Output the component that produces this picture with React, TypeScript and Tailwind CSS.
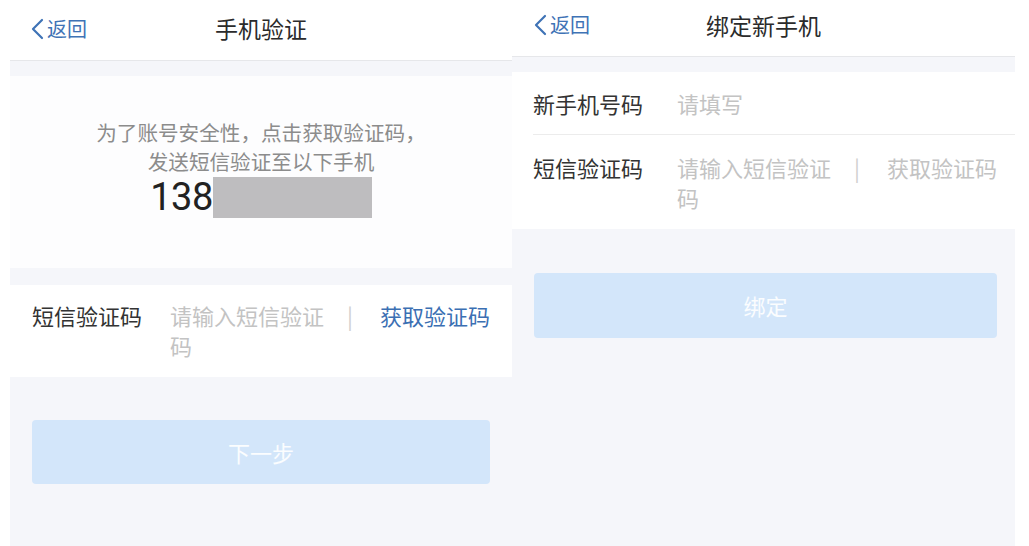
import { FC } from "react";

const font = { fontFamily: '"Noto Sans CJK SC", "Noto Sans", sans-serif' };

const BackLink: FC = () => (
  <div className="flex items-center gap-[3px] text-[20px] text-[#3f73b6]">
    <svg width="14" height="22" viewBox="0 0 14 22" fill="none">
      <polyline points="12,2 3,11 12,20" stroke="#3f73b6" strokeWidth="2.2" strokeLinecap="round" strokeLinejoin="round" />
    </svg>
    <span>返回</span>
  </div>
);

const Header: FC<{ title: string; h: string; pl: string; pb: string }> = ({ title, h, pl, pb }) => (
  <div className={`relative flex items-center justify-center bg-white border-b border-[#e6e7ea] ${h} ${pb}`}>
    <div className={`absolute left-0 top-0 bottom-0 flex items-center ${pl} ${pb}`}>
      <BackLink />
    </div>
    <span className="text-[23px] text-[#2b2b2b]">{title}</span>
  </div>
);

const App: FC = () => {
  return (
    <div className="flex w-[1029px] h-[546px] bg-white overflow-hidden" style={font}>
      {/* left screen */}
      <div className="w-[512px] pl-[10px] flex flex-col">
        <Header title="手机验证" h="h-[61px]" pl="pl-[20px]" pb="pb-[3px]" />
        <div className="flex-1 bg-[#f5f6fa] pt-[15px] flex flex-col">
          <div className="bg-[#fdfdfe] h-[192px] pt-[42px] flex flex-col items-center">
            <p className="text-[20.6px] leading-[29px] text-[#8c8c8c]">为了账号安全性，点击获取验证码，</p>
            <p className="text-[20.6px] leading-[29px] text-[#8c8c8c]">发送短信验证至以下手机</p>
            <div className="flex items-center mt-[1px]">
              <span className="text-[38px] leading-[41px] text-[#222] tracking-[-0.5px]" style={{ fontFamily: '"Roboto", "Noto Sans", sans-serif' }}>138</span>
              <div className="w-[159px] h-[41px] bg-[#bebdbf]" />
            </div>
          </div>
          <div className="mt-[17px] bg-white flex pl-[22px] pr-[22px] pt-[15px] pb-[17px] text-[22px] leading-[30px]">
            <span className="w-[138px] shrink-0 text-[#333]">短信验证码</span>
            <span className="w-[174px] shrink-0 text-[#c3c3c3]">请输入短信验证码</span>
            <span className="w-[12px] text-center text-[#cfcfcf]">|</span>
            <span className="ml-[24px] text-[#3b6fb3]">获取验证码</span>
          </div>
          <div className="px-[22px] mt-[43px]">
            <button className="w-full h-[64px] rounded-[4px] bg-[#d3e6fa] text-[22px] text-white/90">下一步</button>
          </div>
        </div>
      </div>

      {/* right screen */}
      <div className="w-[517px] pr-[14px] flex flex-col">
        <Header title="绑定新手机" h="h-[57px]" pl="pl-[21px]" pb="pb-[6px]" />
        <div className="flex-1 bg-[#f5f6fa] pt-[15px] flex flex-col">
          <div className="bg-white pl-[21px] text-[22px] leading-[30px]">
            <div className="flex h-[63px] items-center border-b border-[#ececec]">
              <span className="w-[144px] shrink-0 text-[#333]">新手机号码</span>
              <span className="text-[#c3c3c3]">请填写</span>
            </div>
            <div className="flex pt-[17px] pb-[17px] pr-[18px]">
              <span className="w-[144px] shrink-0 text-[#333]">短信验证码</span>
              <span className="w-[174px] shrink-0 text-[#c3c3c3]">请输入短信验证码</span>
              <span className="w-[12px] text-center text-[#cfcfcf]">|</span>
              <span className="ml-[24px] text-[#c3c3c3]">获取验证码</span>
            </div>
          </div>
          <div className="pl-[22px] pr-[18px] mt-[44px]">
            <button className="w-full h-[65px] rounded-[4px] bg-[#d3e6fa] text-[22px] text-white/90">绑定</button>
          </div>
        </div>
      </div>
    </div>
  );
};

export default App;
